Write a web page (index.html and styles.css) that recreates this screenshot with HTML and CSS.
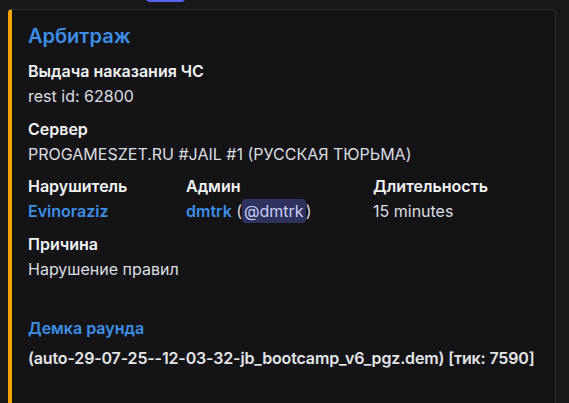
FILE: index.html
```html
<!DOCTYPE html>
<html lang="ru">
<head>
  <meta charset="UTF-8" />
  <meta name="viewport" content="width=device-width, initial-scale=1.0"/>
  <title>Арбитраж</title>
  <link rel="stylesheet" href="styles.css">
</head>
<body>

  <div class="action-stub"></div>

  <div class="embed">
    <div class="embed-title">Арбитраж</div>

    <div class="fields">
      <div class="field full">
        <div class="field-name">Выдача наказания ЧС</div>
        <div class="field-value">rest id: 62800</div>
      </div>

      <div class="field full">
        <div class="field-name">Сервер</div>
        <div class="field-value">PROGAMESZET.RU #JAIL #1 (РУССКАЯ ТЮРЬМА)</div>
      </div>

      <div class="field">
        <div class="field-name">Нарушитель</div>
        <div class="field-value"><span class="link">Evinoraziz</span></div>
      </div>
      <div class="field">
        <div class="field-name">Админ</div>
        <div class="field-value"><span class="link">dmtrk</span> (<span class="mention">@dmtrk</span>)</div>
      </div>
      <div class="field">
        <div class="field-name">Длительность</div>
        <div class="field-value">15 minutes</div>
      </div>

      <div class="field full">
        <div class="field-name">Причина</div>
        <div class="field-value">Нарушение правил</div>
      </div>

      <div class="field full demo">
        <div class="field-name link">Демка раунда</div>
        <div class="field-value strong">(auto-29-07-25--12-03-32-jb_bootcamp_v6_pgz.dem) [тик: 7590]</div>
      </div>
    </div>
  </div>

</body>
</html>
```

FILE: styles.css
```css
html,
body {
  height: 100%;
  overflow: hidden;
}

body {
  background-color: #18181b;
  font-family: Inter, "Noto Sans", sans-serif;
  color: #dbdee1;
  margin: 0;
}

/* bottom edge of a button that sits above the embed */
.action-stub {
  width: 39px;
  height: 32px;
  margin: -30px 0 0 146px;
  background: #5865f2;
  border-radius: 4px;
}

.embed {
  box-sizing: border-box;
  width: 548px;
  margin: 7px 0 0 8px;
  padding: 14px 16px 60px 16px;
  background: #141417;
  border: 1px solid #2c2c31;
  border-left: 4px solid #f5a300;
  border-radius: 4px;
}

.embed-title {
  font-size: 20px;
  line-height: 24px;
  font-weight: 600;
  color: #3d8ee6;
}

.fields {
  display: grid;
  grid-template-columns: 150px 179px 1fr;
  column-gap: 8px;
  row-gap: 10.5px;
  margin-top: 12px;
}

.field.full {
  grid-column: 1 / 4;
}

.field-name {
  font-size: 16px;
  line-height: 22px;
  font-weight: 600;
  color: #f2f3f5;
  margin-bottom: 3px;
}

.field-value {
  font-size: 16px;
  line-height: 22px;
}

.link {
  color: #3d8ee6;
  font-weight: 600;
}

.field-name.link {
  color: #3d8ee6;
}

.mention {
  background: #2e325c;
  color: #c9cdfb;
  border-radius: 4px;
  padding: 2px 2px;
}

.demo {
  margin-top: 27px;
}

.demo .field-name {
  margin-bottom: 8px;
}

.strong {
  font-weight: 600;
  color: #e3e5e8;
  white-space: nowrap;
  letter-spacing: -0.15px;
}
```
